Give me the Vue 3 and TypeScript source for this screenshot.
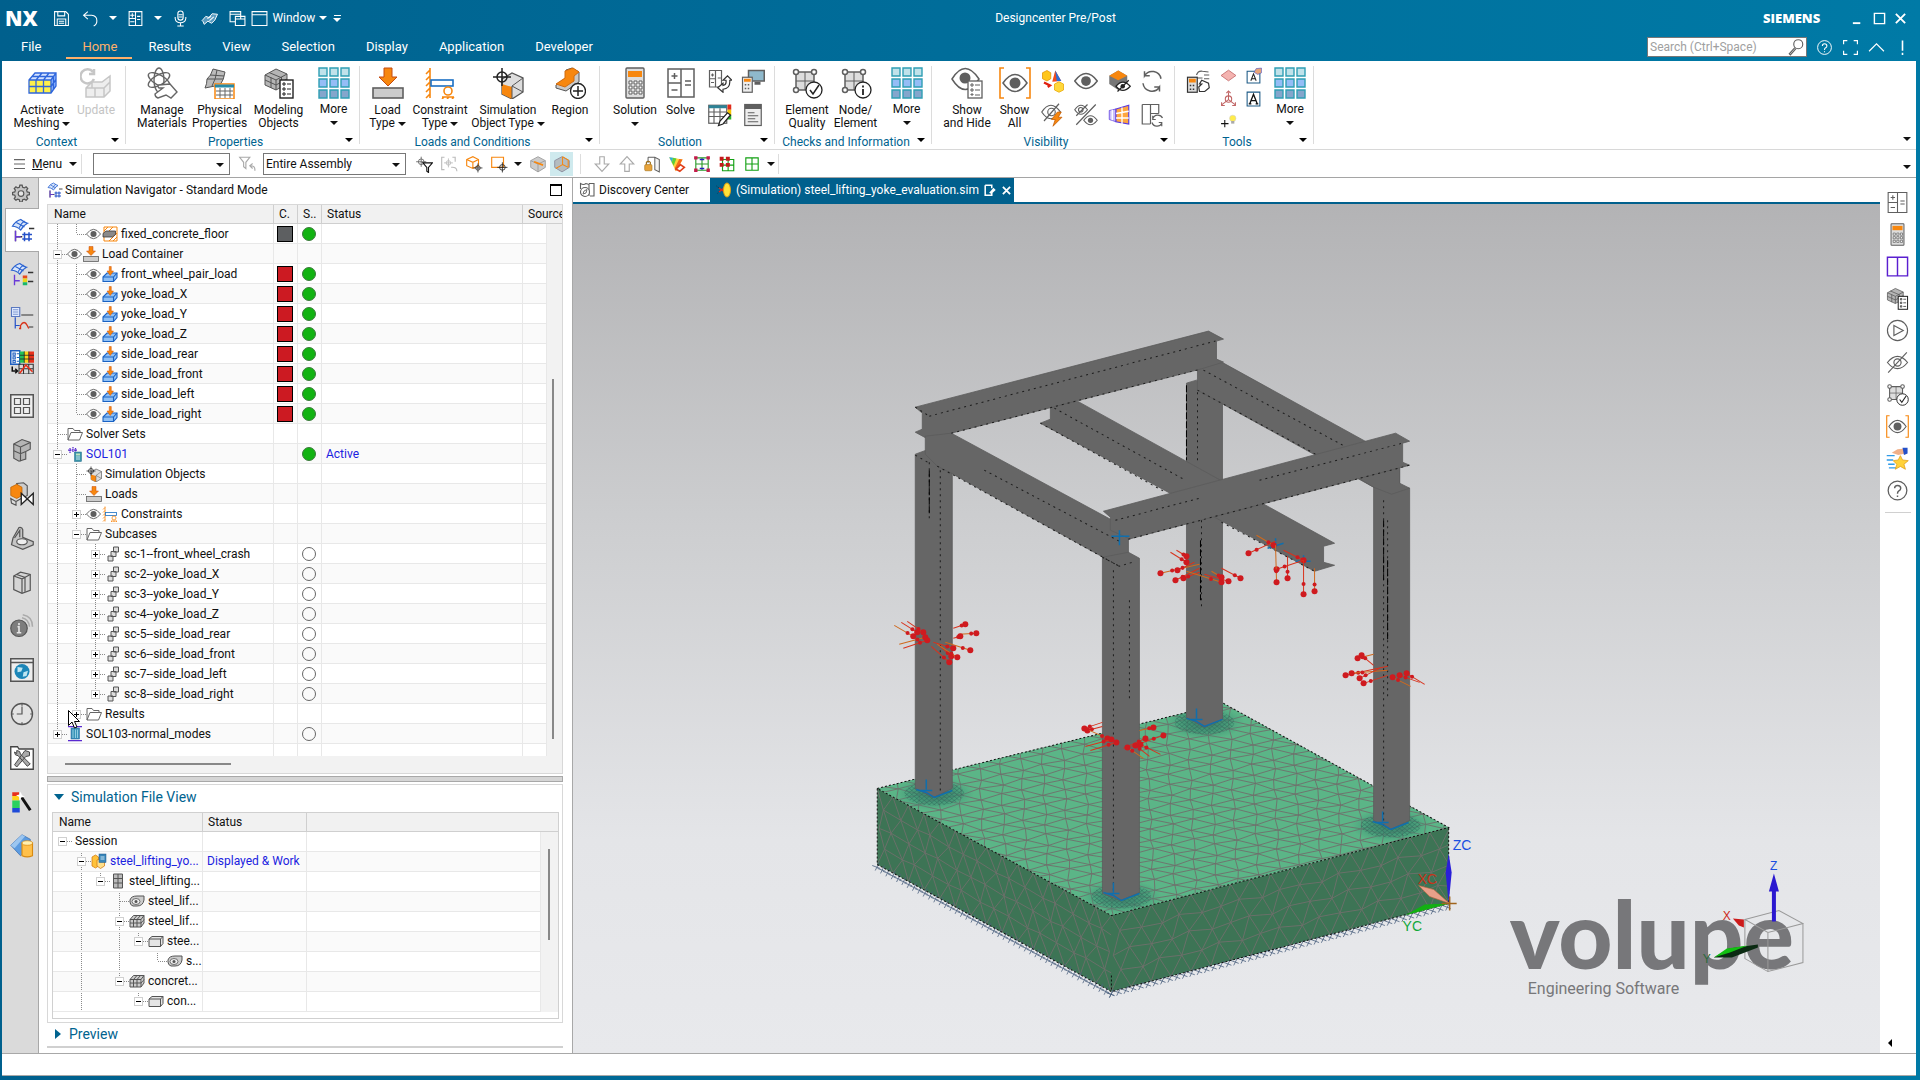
<script setup lang="ts">
import { ref } from 'vue'

type Pt = [number, number]
interface RibbonItem { kind: 'big' | 'grid'; width: number; icon?: string; lines?: string[]; caret?: boolean; more?: boolean; disabled?: boolean; cols?: number; tight?: boolean; icons?: string[] }
interface RibbonGroup { name: string; width: number; lead: number; items: RibbonItem[] }
interface TreeRow { guides: string; icons: string[]; label: string; swatch?: string; dot?: string; status?: string; active?: boolean }

const G = '#5f5f5f'
const O = '#f7870f'
const eyeShape = `<path d="M1 16Q16 -4 31 16Q16 36 1 16Z" fill="#fff" stroke="${G}" stroke-width="2"/><circle cx="16" cy="16" r="6.500" fill="${G}"/>`
const list = (x: number, y: number) =>
  `<rect x="${x}" y="${y}" width="13" height="18" fill="#fff" stroke="#222" stroke-width="1.4"/><path d="M${x + 3} ${y + 3}h2v2h-2zM${x + 3} ${y + 8}h2v2h-2zM${x + 3} ${y + 13}h2v2h-2zM${x + 7} ${y + 4}h4M${x + 7} ${y + 9}h4M${x + 7} ${y + 14}h4" fill="none" stroke="#222"/>`
const calc = `<rect x="7" y="1" width="18" height="30" rx="1" fill="#ddd" stroke="${G}" stroke-width="1.4"/><rect x="9" y="4" width="14" height="6" fill="${O}"/><path d="M10 14h3v3h-3zM15 14h3v3h-3zM20 14h3v3h-3zM10 19h3v3h-3zM15 19h3v3h-3zM20 19h3v3h-3zM10 24h3v3h-3zM15 24h3v3h-3zM20 24h3v3h-3z" fill="#fff" stroke="${G}"/>`
const cubeMesh = `<path d="M2 8L13 2L24 7V17L13 23L2 18Z" fill="#b5b5b5" stroke="#555"/><path d="M2 8L13 13L24 7M13 13V23M6 5.500L18 10.500M8 10.500V21M18.500 10V20M2 13L13 18L24 12" fill="none" stroke="#555"/>`
const nodes = (extra: string) =>
  `<path d="M5 5H23V23H5Z" fill="#ddd" stroke="${G}" stroke-width="1.500"/><path d="M14 5V23M5 14H23" stroke="${G}"/><g fill="#fff" stroke="${G}" stroke-width="1.500"><circle cx="5" cy="5" r="2.500"/><circle cx="23" cy="5" r="2.500"/><circle cx="5" cy="23" r="2.500"/></g><circle cx="23" cy="23" r="8" fill="#fff" stroke="#222" stroke-width="1.300"/>${extra}`
const solveShape = `<path d="M3 2H29V30H3ZM16 2V30M3 16H16M6.500 9H12.500M9.500 6V12M6.500 23H12.500M20 14H26M20 18H26" fill="none" stroke="${G}" stroke-width="1.500"/>`
const target = (x: number, y: number, r: number, c = '#222') =>
  `<g fill="none" stroke="${c}" stroke-width="1.500"><circle cx="${x}" cy="${y}" r="${r}"/><path d="M${x - r - 4} ${y}H${x + r + 4}M${x} ${y - r - 4}V${y + r + 4}"/></g>`
const meshSurface = '<path d="M2 11Q6 4 13 2Q18 6 22 7Q16 10 13 16Q8 11 2 11Z" fill="#d8e6fb" stroke="#2a62d0" stroke-width="1.600"/><path d="M7 6Q13 9 18 12M11 13Q13 7 18 4" fill="none" stroke="#2a62d0" stroke-width="1.400"/>'
const loadShape = `<path d="M12 1H20V10H25L16 19L7 10H12Z" fill="${O}" stroke="#c44a10"/><rect x="1" y="21" width="30" height="10" fill="#ccc" stroke="${G}" stroke-width="1.600"/>`
const constraintShape = `<path d="M6 1V31M6 3L2 7M6 9L2 13M6 15L2 19M6 21L2 25M6 27L2 31M18 30H30M20 30l-2 2M25 30l-2 2M30 30l-2 2" fill="none" stroke="${O}" stroke-width="1.600"/><rect x="7" y="13" width="22" height="6" fill="#fff" stroke="#1a6fc4" stroke-width="1.600"/><circle cx="24" cy="24" r="4" fill="none" stroke="${O}" stroke-width="1.600"/>`
const letterBox = (y: number) => `<path d="M4 ${y}H28V30H4Z" fill="#fff" stroke="#1c5a86" stroke-width="2"/>`

const icons: Record<string, string> = {
  mesh: '<path d="M3 13L9 6H30L25 13Z" fill="#d5e3ff"/><path d="M3 13H25V26H3Z" fill="#fff04a"/><path d="M25 13L30 6V19L25 26Z" fill="#8fb5ff"/><path d="M3 13L9 6H30V19L25 26H3ZM3 13H25V26M25 13L30 6M3 19.500H25L30 12.500M10 13V26M17.500 13V26M10 13L16 6M17.500 13L23 6M6 9.500H27.500V22" fill="none" stroke="#2f66dc" stroke-width="1.300"/>',
  update: '<path d="M13 5A7 7 0 1 0 14 12M14 2V7H9" fill="none" stroke="#c6c6c6" stroke-width="2.500"/><path d="M6 21L12 15H22L30 9V24L24 30H6ZM6 21H24V30M24 21L30 15M15 21V30M12 15V21" fill="#eee" stroke="#c6c6c6" stroke-width="1.500"/>',
  atom: `<g fill="none" stroke="#666" stroke-width="1.400"><ellipse cx="13" cy="13" rx="12" ry="5" transform="rotate(30 13 13)"/><ellipse cx="13" cy="13" rx="12" ry="5" transform="rotate(90 13 13)"/><ellipse cx="13" cy="13" rx="12" ry="5" transform="rotate(150 13 13)"/></g><path d="M9 27L17 21H13Q11 19 13 18L24 17L31 25L25 31L20 28L12 31Q9 30 9 27Z" fill="#fff" stroke="#666" stroke-width="1.400"/>`,
  physical: '<path d="M3 12Q7 9 9 2L21 5Q20 13 16 18L1 21Q3 17 3 12Z" fill="#bbb" stroke="#555"/><path d="M13 3Q12 12 8 19M3 12L19 12M6 8L20 9" fill="none" stroke="#555"/><rect x="11" y="17" width="19" height="15" fill="#fff" stroke="#f7870f" stroke-width="1.500"/><path d="M11 19H30" stroke="#268aa8" stroke-width="3"/><path d="M12 24H29M12 28H29M16 21V31M21 21V31M26 21V31" stroke="#666"/>',
  modeling: cubeMesh + list(17, 13),
  more: '<g stroke="#2f9fb4" stroke-width="1.400"><path d="M1 1h8v8h-8zM12 1h8v8h-8zM23 1h8v8h-8z" fill="#c0e2ea"/><path d="M1 12h8v8h-8zM12 12h8v8h-8zM23 12h8v8h-8z" fill="#95bdf6"/><path d="M1 23h8v8h-8zM12 23h8v8h-8zM23 23h8v8h-8z" fill="#84a6cc"/></g>',
  load: loadShape,
  constraint: constraintShape,
  simobj: '<path d="M10 12L20 6L31 11V25L20 32L10 27Z" fill="#ddd" stroke="#555" stroke-width="1.300"/><path d="M10 17L20 20V32L10 27Z" fill="#f7870f"/><path d="M20 19L31 11M20 19L31 25M20 19V32" fill="none" stroke="#555"/>' + target(10, 10, 5),
  region: `<path d="M2 18L12 11V3L18 1L25 5V15L12 24L2 21Z" fill="#c9c9c9" stroke="#555"/><path d="M2 17L11 11V4L19 1L25 5L20 9V14L11 20Z" fill="${O}" stroke="#d06c10"/><circle cx="24" cy="24" r="7.500" fill="#fff" stroke="#222" stroke-width="1.300"/><path d="M19 24H29M24 19V29" stroke="#222" stroke-width="1.500"/>`,
  solution: calc,
  solve: solveShape,
  solveArrow: `<path d="M2 2H18V24H2ZM10 2V24M2 13H10M4 8H8M6 6V10M4 18H8M13 12H17" fill="none" stroke="${G}" stroke-width="1.600"/><path d="M13 25L20 19V22Q25 21 24 15H20L26 9L32 15H29Q30 26 20 27V31Z" fill="#fff" stroke="#333" stroke-width="1.600"/>`,
  monitor: `<rect x="10" y="2" width="21" height="14" fill="#8fb9cc" stroke="${G}" stroke-width="2"/><path d="M18 17h8v4h-8z" fill="${G}"/><rect x="2" y="11" width="13" height="20" fill="#eee" stroke="${G}" stroke-width="1.600"/><path d="M4 13h9v4h-9z" fill="${O}"/><path d="M5 20h2v2h-2zM9 20h2v2h-2zM5 25h2v2h-2zM9 25h2v2h-2z" fill="${G}"/>`,
  tableEdit: `<rect x="1" y="3" width="24" height="24" fill="#fff" stroke="${G}" stroke-width="1.600"/><path d="M1 5H25" stroke="#2d8296" stroke-width="4"/><path d="M1 12H25M1 18H25M8 7V27M16 7V27" stroke="${G}" stroke-width="1.500"/><path d="M26 2h5v7h-5z" fill="#e02a1a"/><path d="M26 9h5v7h-5z" fill="#f6c400"/><path d="M26 16h5v6h-5z" fill="#2bb62b"/><path d="M14 30L16 24L26 13L30 16L20 28Z" fill="#fff" stroke="#222" stroke-width="1.600"/>`,
  log: `<rect x="5" y="2" width="22" height="28" fill="#eee" stroke="${G}" stroke-width="1.600"/><path d="M5 5H27" stroke="${G}" stroke-width="6"/><path d="M9 13H18M9 17H23M9 21H19M9 25H23" stroke="${G}" stroke-width="1.600"/>`,
  quality: nodes('<path d="M19 23L22 27L28 18" fill="none" stroke="#222" stroke-width="1.500"/>'),
  nodeInfo: nodes('<path d="M23 18.500V20.500M23 22V28" fill="none" stroke="#222" stroke-width="1.800"/>'),
  showHide: `<path d="M1 12Q14 -9 28 12Q14 33 1 12Z" fill="#fff" stroke="${G}" stroke-width="1.500"/><circle cx="14" cy="11" r="5.500" fill="${G}"/><rect x="17" y="14" width="14" height="17" fill="#fff" stroke="${G}" stroke-width="1.300"/><path d="M20 17h2v2h-2zM20 22h2v2h-2zM20 27h2v1h-2zM24 18h5M24 23h5M24 28h5" fill="none" stroke="${G}"/>`,
  showAll: `<path d="M5 1H1V31H5M27 1H31V31H27" fill="none" stroke="${O}" stroke-width="1.600"/><path d="M4 16Q16 -1 28 16Q16 33 4 16Z" fill="#fff" stroke="${G}" stroke-width="1.500"/><circle cx="16" cy="16" r="5.500" fill="${G}"/>`,
  shapes: '<path d="M2 5L8 2L13 5V13L8 16L2 13Z" fill="#ffc61a" stroke="#e09200"/><path d="M15 17L19 2L27 16Z" fill="#f24a1a"/><path d="M19 2L27 16H21Z" fill="#2a6fd8"/><path d="M4 18L12 22L9 24" fill="none" stroke="#e02010" stroke-width="3"/><path d="M18 20L24 17L30 20V28L24 31L18 28Z" fill="#ffd83a" stroke="#e8a500"/>',
  eye: eyeShape,
  cubeEye: `<path d="M3 9L15 2L27 9V20L15 28L3 20Z" fill="#777"/><path d="M3 9L15 2L27 9L15 15Z" fill="${O}"/><path d="M12 23Q21 12 31 23Q21 34 12 23Z" fill="#fff" stroke="#222" stroke-width="1.600"/><circle cx="21" cy="23" r="3" fill="#222"/><path d="M14 30L29 15" stroke="#222" stroke-width="1.600"/>`,
  refresh: `<path d="M28 13A12 12 0 0 0 6 9V3M6 9H13M4 19A12 12 0 0 0 26 24V30M26 24H19" fill="none" stroke="${G}" stroke-width="2"/>`,
  eyeBolt: `<path d="M1 12Q13 -6 26 12Q13 30 1 12Z" fill="#fff" stroke="${G}" stroke-width="1.600"/><circle cx="14" cy="12" r="5" fill="none" stroke="${G}" stroke-width="1.500"/><path d="M4 24L24 1" stroke="${G}" stroke-width="1.600"/><path d="M22 12L14 22H19L16 31L28 19H23L27 12Z" fill="${O}" stroke="#c05a00"/>`,
  eyeSwap: `<path d="M1 9Q9 -3 18 9Q9 21 1 9ZM13 23Q22 11 31 23Q22 35 13 23Z" fill="#fff" stroke="${G}" stroke-width="1.500"/><circle cx="9" cy="9" r="3" fill="none" stroke="${G}" stroke-width="1.500"/><circle cx="22" cy="23" r="3.500" fill="${G}"/><path d="M3 29L29 2M3 17L18 2" stroke="${G}" stroke-width="1.600"/>`,
  clip: '<path d="M3 10L12 8V25L3 22Z" fill="#c9bdf8" stroke="#5a3ae0"/><path d="M12 8L29 3V28L12 25Z" fill="#ffa63e" stroke="#5a3ae0" stroke-width="1.500"/><path d="M12 14L29 11M12 20L29 20M20 6V28M7 9V23" stroke="#fff" stroke-width="1.800"/>',
  layoutRefresh: `<path d="M3 2H25V14M3 2V28H14M14 2V28M14 14H25" fill="none" stroke="${G}" stroke-width="1.600"/><path d="M30 20A7 7 0 0 0 17 21M16 26A7 7 0 0 0 29 27M17 17V22H21M29 31V26H25" fill="none" stroke="${G}" stroke-width="1.600"/>`,
  calcHand: `<path d="M14 8Q16 2 22 3L30 4M14 12H22M24 8H31M24 13H31" fill="none" stroke="${G}" stroke-width="1.600"/><rect x="2" y="11" width="13" height="20" fill="#ddd" stroke="#333" stroke-width="1.600"/><path d="M4 13h9v5h-9z" fill="${O}"/><path d="M5 21h2v2h-2zM9 21h2v2h-2zM5 26h2v2h-2zM9 26h2v2h-2z" fill="#333"/><path d="M17 24L21 20H18L21 15L30 19L31 25L25 30H18Z" fill="#fff" stroke="#333" stroke-width="1.600"/>`,
  diamond: '<path d="M2 16L16 6L30 16L16 26Z" fill="#f4b3b0" stroke="#c46a6a" stroke-width="1.600"/>',
  noteEdit: letterBox(8) + '<path d="M11 26L16 13L21 26M13 22H19" fill="none" stroke="#222" stroke-width="2"/><path d="M17 10L21 3L31 2V11L24 14Z" fill="#e8a57a" stroke="#3a48c8"/>',
  csys: '<g fill="none" stroke="#c06464" stroke-width="2"><path d="M16 18V4M16 18L3 28M16 18L29 28"/><circle cx="16" cy="17" r="6"/><path d="M12 6L16 2L20 6M3 23V29H9M29 23V29H23"/></g>',
  letterA: letterBox(4) + '<path d="M9 26L16 8L23 26M12 20H20M7 26H12M20 26H25" fill="none" stroke="#111" stroke-width="2.500"/>',
  bulb: '<path d="M2 20H16M9 13V27" stroke="#111" stroke-width="2"/><circle cx="24" cy="10" r="6" fill="#ffec4a" stroke="#ccc"/><path d="M21 15h6v5h-6z" fill="#aaa"/>',
  save: '<path d="M3 3H24L29 8V29H3ZM9 3V11H22V3M8 29V17H24V29M11 21H21M11 25H21" fill="none" stroke="#fff" stroke-width="2"/>',
  undo: '<path d="M11 3L3 10L11 17M3 10H18Q28 11 28 20Q28 27 22 30" fill="none" stroke="#fff" stroke-width="2"/>',
  qcalc: '<path d="M4 3H28V29H4ZM16 3V29M4 16H16M6 10H14M10 6V14M6 22H14M19 12H25M19 18H25" fill="none" stroke="#fff" stroke-width="2"/>',
  mic: '<rect x="11" y="2" width="10" height="17" rx="5" fill="none" stroke="#fff" stroke-width="2"/><path d="M6 13V16Q7 24 16 24Q25 24 26 16V13M16 24V30M10 30H22M12 9H20M12 13H20" fill="none" stroke="#fff" stroke-width="2"/>',
  hand: '<path d="M2 20L9 12L15 14L21 7L31 8L26 19L20 25L13 21L6 27L4 22Z" fill="#5a9cc0" stroke="#fff" stroke-width="1.800"/><path d="M12 16L19 12M16 20L24 13" stroke="#fff" stroke-width="2"/>',
  windows: '<path d="M2 3H22V17H12V22H2ZM2 8H22M12 12H30V29H12ZM12 17H30" fill="none" stroke="#fff" stroke-width="2"/>',
  window: '<path d="M2 3H30V29H2ZM2 9H30" fill="none" stroke="#fff" stroke-width="2"/>',
  help: `<circle cx="16" cy="16" r="13" fill="none" stroke="currentColor" stroke-width="1.800"/><path d="M12 13Q12 9 16 9Q20.500 9 20.500 13Q20.500 15.500 17.500 17Q16 18 16 20.500M16 23V25" fill="none" stroke="currentColor" stroke-width="2"/>`,
  full: '<path d="M3 10V3H10M22 3H29V10M29 22V29H22M10 29H3V22" fill="none" stroke="#fff" stroke-width="2.200"/>',
  up: '<path d="M2 23L16 9L30 23" fill="none" stroke="#fff" stroke-width="2.200"/>',
  bang: '<path d="M16 3V22M16 26V30" stroke="#fff" stroke-width="3"/>',
  search: `<circle cx="20" cy="11" r="8" fill="none" stroke="${G}" stroke-width="2"/><path d="M14 17L4 28L6 30L16 19" fill="none" stroke="${G}" stroke-width="2"/>`,
  filterBack: '<path d="M3 4H21L14 13V24L10 21V13ZM30 28Q31 19 22 19M26 15L21 19L26 24" fill="none" stroke="#a9a9a9" stroke-width="2"/>',
  targetFilter: target(11, 12, 5, G) + '<path d="M14 14H31L24 22V31L21 29V22Z" fill="#fff" stroke="#111" stroke-width="2"/>',
  targetUndo: '<path d="M8 4H3V26H8M22 4H27V12" fill="none" stroke="#bbb" stroke-width="2"/>' + target(15, 14, 4, '#bbb') + '<path d="M30 29Q30 21 20 22" fill="none" stroke="#bbb" stroke-width="2"/>',
  cubeTarget: `<path d="M3 8L14 3L24 8V19L14 24L3 19ZM3 8L14 13L24 8M14 13V24" fill="#fff" stroke="${O}" stroke-width="2"/>` + target(23, 23, 4, '#333'),
  squareTarget: `<path d="M3 4H24V22H3Z" fill="#fff" stroke="${O}" stroke-width="2"/>` + target(22, 22, 5),
  cubeGrey: `<path d="M3 10L16 3L29 10V22L16 30L3 22Z" fill="#ccc" stroke="#999" stroke-width="1.500"/><path d="M16 16V30M3 10L16 16L29 10" fill="none" stroke="#999" stroke-width="1.500"/><path d="M9 12L25 18" stroke="${O}" stroke-width="3"/>`,
  cubeActive: `<path d="M3 10L16 3L29 10V22L16 30L3 22Z" fill="#b4bcc0" stroke="#889" stroke-width="1.500"/><path d="M17 3V17L5 24M17 17L27 22M17 3L27 9V22" fill="none" stroke="${O}" stroke-width="1.800"/>`,
  down: '<path d="M12 3H20V16H28L16 29L4 16H12Z" fill="#fff" stroke="#aaa" stroke-width="2"/>',
  upArrow: '<path d="M12 29H20V16H28L16 3L4 16H12Z" fill="#fff" stroke="#aaa" stroke-width="2"/>',
  lockPage: `<path d="M9 4H21L29 8V30L21 26V4M9 4V14" fill="#f4f4f4" stroke="${G}" stroke-width="1.800"/><rect x="3" y="17" width="13" height="11" rx="2" fill="#e9a43a" stroke="#9c6a10"/><path d="M6 17V13Q9 9 13 13V17" fill="none" stroke="#9c6a10" stroke-width="2"/>`,
  cone: '<path d="M2 4L26 8L14 29Z" fill="#ffd23a"/><path d="M2 4L9 5L7 13Z" fill="#28b0e0"/><path d="M9 5L15 6L10 19L7 13Z" fill="#5ad03a"/><path d="M20 7L26 8L14 29L12 23Z" fill="#f46a1a"/><path d="M22 17L29 22L21 29L14 25Z" fill="#fff" stroke="#e2401a" stroke-width="3"/>',
  mesh4: '<path d="M5 5H27V27H5ZM16 5V27M5 16H27" fill="none" stroke="#2a9a2a" stroke-width="2"/><path d="M2 2h6v6h-6zM24 2h6v6h-6zM2 24h6v6h-6zM24 24h6v6h-6z" fill="#c41a4a"/><path d="M12 8H20M12 24H20" stroke="#2020c0" stroke-width="3"/>',
  mesh3: '<path d="M8 8H28V28H8ZM18 8V28M8 18H28" fill="none" stroke="#12a012" stroke-width="2"/><path d="M3 3h7v7h-7zM14 3h7v7h-7zM3 14h7v7h-7zM14 14h7v7h-7z" fill="#c41a1a"/>',
  mesh2: '<path d="M5 5H27V27H5ZM16 5V27M5 16H27" fill="#fff" stroke="#12a012" stroke-width="2"/>',
  gear: '<path d="M14 2h4l1 4 3 1 3-2 3 3-2 3 1 3 4 1v4l-4 1-1 3 2 3-3 3-3-2-3 1-1 4h-4l-1-4-3-1-3 2-3-3 2-3-1-3-4-1v-4l4-1 1-3-2-3 3-3 3 2 3-1z" fill="#c4c4c4" stroke="#555" stroke-width="2.200"/><circle cx="16" cy="17" r="5" fill="#e6e6e6" stroke="#555" stroke-width="2"/>',
  navSim: meshSurface + '<path d="M24 14H31M6 17V31M6 25H15" fill="none" stroke="#333" stroke-width="1.800"/><path d="M6 17V31M6 25H13" stroke="#6a3ad8" stroke-width="1.800"/><path d="M18 19V31M24 19V31M15 22H28M15 28H28" stroke="#2450c8" stroke-width="2"/>',
  navPost: meshSurface + '<path d="M24 14H31M24 26H31" stroke="#333" stroke-width="1.800"/><path d="M6 17V31M6 25H13" stroke="#6a3ad8" stroke-width="1.800"/><path d="M17 18h6v4h-6z" fill="#e84a1a"/><path d="M17 22h6v5h-6z" fill="#e8d81a"/><path d="M17 27h6v4h-6z" fill="#1ab86a"/>',
  navXy: '<path d="M2 2H13V14H2Z" fill="#e2ecff" stroke="#5a78c0" stroke-width="1.500"/><path d="M4 5H11M4 8H11M4 11H11" stroke="#5a78c0"/><path d="M15 12H31M25 28H31" stroke="#333" stroke-width="1.600"/><path d="M7 15V30M7 26H13" stroke="#2450c8" stroke-width="1.600"/><path d="M12 30H14V26Q19 18 23 26L25 30" fill="none" stroke="#d8341a" stroke-width="1.800"/>',
  navMulti: '<path d="M1 1H13V19H1Z" fill="#fff" stroke="#2060c0" stroke-width="2"/><path d="M4 4h3v3h-3zM4 9h3v3h-3zM4 14h3v3h-3zM9 5h3M9 10h3M9 15h3" fill="none" stroke="#2060c0" stroke-width="1.500"/><path d="M13 2H20V17H13Z" fill="#22c05a"/><path d="M19 2H25V17H19Z" fill="#ffd21a"/><path d="M25 2H32V17H25Z" fill="#e8301a"/><path d="M13 7H32M13 12H32M19 2V17M25 2V17" stroke="#222"/><path d="M12 19H31V32H12ZM18 19V32M25 19V32M12 25H31" fill="none" stroke="#333" stroke-width="1.400"/><path d="M13 31L21 20L30 29" fill="none" stroke="#e8301a" stroke-width="2"/><path d="M3 22V28H9M7 25L10 28L7 31" fill="none" stroke="#111" stroke-width="2"/>',
  four: '<path d="M1 1H31V31H1Z" fill="#eee" stroke="#555" stroke-width="2"/><path d="M6 6h8v8h-8zM18 6h8v8h-8zM6 18h8v8h-8zM18 18h8v8h-8z" fill="#eee" stroke="#555" stroke-width="1.600"/>',
  part: '<path d="M5 8L16 2L27 6V15L21 18V28L12 31L5 27Z" fill="#b5b5b5" stroke="#555" stroke-width="1.500"/><path d="M5 8L14 12V31M14 12L27 6M5 17L14 21L21 18" fill="none" stroke="#555" stroke-width="1.500"/>',
  constraintNav: `<path d="M9 2L18 1L23 5V18L16 22Z" fill="#ccc" stroke="#555" stroke-width="1.500"/><path d="M1 7L9 3L16 7V18L9 22L1 18Z" fill="${O}" stroke="#b86000"/><path d="M1 22L8 26V31L2 28ZM8 26L15 22" fill="#ddd" stroke="#555" stroke-width="1.500"/><path d="M15 15V30L31 15V30Z" fill="#fff" stroke="#222" stroke-width="1.800"/>`,
  hinge: '<path d="M4 16L12 2Q16 1 17 5V15L31 21V25L17 31L2 25Z" fill="#c5c5c5" stroke="#555" stroke-width="1.600"/><ellipse cx="16" cy="21" rx="7" ry="4" fill="#eee" stroke="#555" stroke-width="1.600"/><path d="M6 16L13 6V15" fill="none" stroke="#555" stroke-width="1.600"/>',
  books: '<path d="M5 8L14 3L27 6V27L16 31L5 26Z" fill="#d5d5d5" stroke="#555" stroke-width="1.600"/><path d="M5 8L16 12V31M16 12L27 6M9 6L20 10V29" fill="none" stroke="#555" stroke-width="1.600"/>',
  info: '<path d="M16 5Q25 7 26 17M17 1Q30 3 30 17" fill="none" stroke="#aaa" stroke-width="2"/><circle cx="12" cy="19" r="11" fill="#7d7d7d" stroke="#555" stroke-width="1.600"/><path d="M12 12V15M10 17H12V25M9 25H15" fill="none" stroke="#e5e5e5" stroke-width="2.200"/>',
  globe: '<path d="M1 1H31V31H1ZM1 6H31" fill="#eee" stroke="#555" stroke-width="2"/><circle cx="16" cy="18" r="10" fill="#1c86b8"/><path d="M10 12L17 13L15 18L10 19ZM18 19L24 17L22 24L17 25Z" fill="#bfe6f2"/>',
  clock: '<circle cx="16" cy="16" r="14" fill="#e3e3e3" stroke="#555" stroke-width="1.800"/><path d="M16 6V16H9M16 2V5M16 27V30M2 16H5M27 16H30" fill="none" stroke="#555" stroke-width="1.600"/>',
  tools: '<path d="M1 1H10L12 4H31V31H1Z" fill="#fff" stroke="#444" stroke-width="1.800"/><path d="M6 8Q6 13 11 13L23 27L27 24L14 11Q14 6 9 6V10ZM26 8L20 6L17 10L6 25L9 28L21 14L26 13Z" fill="#aaa" stroke="#444" stroke-width="1.300"/>',
  wand: '<path d="M3 3H12V8H3Z" fill="#e8301a"/><path d="M3 8H12V14H3Z" fill="#ffd21a"/><path d="M3 14H13V24H3Z" fill="#2ad060"/><path d="M3 24H13V30H3Z" fill="#1f4ad8"/><path d="M15 9L27 27" stroke="#111" stroke-width="4"/><path d="M14 2L16 7L20 9L15 10L13 14L12 9L8 7L13 6Z" fill="#fff"/>',
  colorPart: '<path d="M1 15L16 1L27 7V17L14 29Z" fill="#5c9be0" stroke="#3a6fb0"/><path d="M1 15L16 1L20 3L6 19Z" fill="#9cc6f0"/><path d="M16 12H30V29Q23 32 16 29Z" fill="#ffc04a" stroke="#d88a10" stroke-width="1.500"/><ellipse cx="23" cy="12" rx="7" ry="3" fill="#fff0b0" stroke="#d88a10"/>',
  split: '<path d="M2 3H30V29H2ZM16 3V29" fill="none" stroke="#5a1fd0" stroke-width="2"/>',
  play: `<circle cx="16" cy="16" r="14" fill="none" stroke="${G}" stroke-width="1.600"/><path d="M11 9L24 16L11 23Z" fill="none" stroke="${G}" stroke-width="1.600"/>`,
  eyeOff: `<path d="M2 16Q16 -1 30 16Q16 33 2 16Z" fill="none" stroke="${G}" stroke-width="1.600"/><circle cx="16" cy="16" r="5" fill="none" stroke="${G}" stroke-width="1.600"/><path d="M3 30L29 2" stroke="${G}" stroke-width="1.600"/>`,
  star: '<path d="M1 12H12M1 18H10M3 24H12M4 29H14" stroke="#2f9be8" stroke-width="2"/><path d="M20 12L23 18L31 19L25 24L27 31L20 27L13 31L15 24L10 19L17 18Z" fill="#ffd23a" stroke="#e09a10"/><path d="M8 8L16 3L27 2V9L17 11Z" fill="#f0b08a"/><path d="M23 1H30V9L25 11Z" fill="#2450c8"/>',
  treeFloor: `<path d="M4 2H30V30H4Z" fill="#fff" stroke="${O}" stroke-width="2"/><path d="M4 10L12 2M4 20L22 2M14 30L30 14M22 30L30 22" stroke="${O}" stroke-width="2"/><path d="M2 15L8 10H27V17L21 22H2Z" fill="#8a8a8a" stroke="#333" stroke-width="1.500"/>`,
  treeLoad: `<path d="M2 22L10 14H30V23L23 31H2Z" fill="#8fc0f5" stroke="#1a62c4" stroke-width="2.200"/><path d="M2 22H23V31M23 22L30 14" fill="none" stroke="#1a62c4" stroke-width="2.200"/><path d="M14.500 1H18.500V10H23L16.500 19L10 10H14.500Z" fill="${O}" stroke="#d0500a"/>`,
  folder: '<path d="M2 28V5H12L15 9H26V13M2 28L8 13H31L25 28Z" fill="#fff" stroke="#666" stroke-width="2"/>',
  sol: '<path d="M2 8H20M6 4V14M12 2V12M17 4V14" stroke="#5a2ad0" stroke-width="2.500" stroke-dasharray="3 1"/><rect x="15" y="12" width="14" height="19" fill="#3a94a8" stroke="#1f6a8c"/><path d="M18 15h8v4h-8z" fill="#bfe6c0"/><path d="M18 22h8M18 26h8" stroke="#d0eef2" stroke-width="2"/>',
  sol103: '<path d="M2 1H30M2 29H30" stroke="#5a2ad0" stroke-width="2.500"/><rect x="8" y="4" width="17" height="22" fill="#3a94b8" stroke="#1f5a9c"/><path d="M12 7V24M17 7V24M21 7V24" stroke="#a5dcec" stroke-width="1.600"/>',
  subcase: '<path d="M17 2H27V12H17ZM12 11H22V21H12ZM6 20H16V30H6Z" fill="#ddd" stroke="#555" stroke-width="2"/>',
  fileSim: '<path d="M2 8L9 4L15 8V26L9 30L2 26Z" fill="#ffc23a" stroke="#d07a10" stroke-width="1.500"/><path d="M12 14L20 11L27 14V26L19 31L12 26Z" fill="#ffe08a" stroke="#d07a10" stroke-width="1.500"/><rect x="16" y="2" width="14" height="17" fill="#3a86b8" stroke="#1f5a8c"/><path d="M19 8h8M19 12h8" stroke="#cfe8f5" stroke-width="2"/>',
  fileFem: '<path d="M7 2H25V30H7ZM16 2V30M7 11H25M7 20H25" fill="#bbb" stroke="#555" stroke-width="2"/>',
  filePart: '<path d="M2 14Q4 6 16 6H30V14Q28 26 16 26H8Q2 24 2 18Z" fill="#ccc" stroke="#555" stroke-width="2"/><ellipse cx="14" cy="17" rx="8" ry="6" fill="#eee" stroke="#555" stroke-width="1.600"/><circle cx="14" cy="17" r="3" fill="#555"/>',
  fileMesh: '<path d="M2 13L9 5H30V20L24 28H2ZM2 13H24V28M24 13L30 5M2 20H24L30 13M9 13V28M16 13V28M9 13L16 5M16 13L23 5" fill="#ccc" stroke="#555" stroke-width="2"/>',
  fileIdeal: '<path d="M2 12L8 7H30V21L25 27H2ZM2 12H25V27M25 12L30 7" fill="#e5e5e5" stroke="#555" stroke-width="2"/>',
  discovery: `<path d="M3 14V3Q9 7 14 3L20 5V28M20 3H30V28H22" fill="none" stroke="${G}" stroke-width="2.200"/><circle cx="12" cy="20" r="9" fill="#fff" stroke="${G}" stroke-width="2.200"/><path d="M8 24L10 18L16 15L14 22Z" fill="none" stroke="${G}" stroke-width="1.800"/>`,
  simTab: '<path d="M1 8L10 15L2 24" fill="none" stroke="#222" stroke-width="1.500" stroke-dasharray="2 2"/><path d="M6 12L17 20M6 20L17 11" stroke="#e02a1a" stroke-width="2.500"/><ellipse cx="22" cy="16" rx="7" ry="14" fill="#ffe23a" stroke="#e0a010" stroke-width="2"/>',
  clipboard: '<path d="M5 5H20V12M5 5V28H20V22" fill="none" stroke="#fff" stroke-width="3.500"/><path d="M14 22L24 11L29 16L19 25Z" fill="#fff"/>',
}

const menuTabs = ['File', 'Home', 'Results', 'View', 'Selection', 'Display', 'Application', 'Developer']
const activeMenu = ref('Home')

const ribbon: RibbonGroup[] = [
  { name: 'Context', width: 124, lead: 8, items: [
    { kind: 'big', width: 64, icon: 'mesh', lines: ['Activate', 'Meshing'], caret: true },
    { kind: 'big', width: 44, icon: 'update', lines: ['Update'], disabled: true } ] },
  { name: 'Properties', width: 234, lead: 9, items: [
    { kind: 'big', width: 54, icon: 'atom', lines: ['Manage', 'Materials'] },
    { kind: 'big', width: 61, icon: 'physical', lines: ['Physical', 'Properties'] },
    { kind: 'big', width: 57, icon: 'modeling', lines: ['Modeling', 'Objects'] },
    { kind: 'big', width: 53, icon: 'more', lines: ['More'], more: true } ] },
  { name: 'Loads and Conditions', width: 240, lead: 6, items: [
    { kind: 'big', width: 43, icon: 'load', lines: ['Load', 'Type'], caret: true },
    { kind: 'big', width: 62, icon: 'constraint', lines: ['Constraint', 'Type'], caret: true },
    { kind: 'big', width: 74, icon: 'simobj', lines: ['Simulation', 'Object Type'], caret: true },
    { kind: 'big', width: 50, icon: 'region', lines: ['Region'] } ] },
  { name: 'Solution', width: 175, lead: 12, items: [
    { kind: 'big', width: 46, icon: 'solution', lines: ['Solution'], more: true },
    { kind: 'big', width: 45, icon: 'solve', lines: ['Solve'] },
    { kind: 'grid', width: 66, cols: 2, icons: ['solveArrow', 'monitor', 'tableEdit', 'log'] } ] },
  { name: 'Checks and Information', width: 157, lead: 9, items: [
    { kind: 'big', width: 46, icon: 'quality', lines: ['Element', 'Quality'] },
    { kind: 'big', width: 51, icon: 'nodeInfo', lines: ['Node/', 'Element'] },
    { kind: 'big', width: 51, icon: 'more', lines: ['More'], more: true } ] },
  { name: 'Visibility', width: 243, lead: 9, items: [
    { kind: 'big', width: 52, icon: 'showHide', lines: ['Show', 'and Hide'] },
    { kind: 'big', width: 43, icon: 'showAll', lines: ['Show', 'All'] },
    { kind: 'grid', width: 132, cols: 4, icons: ['shapes', 'eye', 'cubeEye', 'refresh', 'eyeBolt', 'eyeSwap', 'clip', 'layoutRefresh'] } ] },
  { name: 'Tools', width: 139, lead: 5, items: [
    { kind: 'grid', width: 36, cols: 1, icons: ['calcHand'] },
    { kind: 'grid', width: 50, cols: 2, tight: true, icons: ['diamond', 'noteEdit', 'csys', 'letterA', 'bulb'] },
    { kind: 'big', width: 48, icon: 'more', lines: ['More'], more: true } ] },
]

const filterText = ref('')
const scope = ref('Entire Assembly')
const query = ref('')

const railIcons = ['gear', 'navSim', 'navPost', 'navXy', 'navMulti', 'four', 'part', 'constraintNav', 'hinge', 'books', 'info', 'globe', 'clock', 'tools', 'wand', 'colorPart']
const dockIcons = ['solve', 'solution', 'split', 'modeling', 'play', 'eyeOff', 'quality', 'showAll', 'star', 'help']

const RED = '#cc1a22'
const loads = ['front_wheel_pair_load', 'yoke_load_X', 'yoke_load_Y', 'yoke_load_Z', 'side_load_rear', 'side_load_front', 'side_load_left', 'side_load_right']
const subcases = ['front_wheel_crash', 'yoke_load_X', 'yoke_load_Y', 'yoke_load_Z', 'side_load_rear', 'side_load_front', 'side_load_left', 'side_load_right']

// Guide codes: | line, T branch, L last branch, p/q plus (middle/last), m/n minus (middle/last), s root minus
const tree: TreeRow[] = [
  { guides: '|L', icons: ['eye', 'treeFloor'], label: 'fixed_concrete_floor', swatch: '#5d5f61', dot: 'on' },
  { guides: 'm', icons: ['eye', 'load'], label: 'Load Container' },
  ...loads.map((label, i): TreeRow => ({ guides: i === loads.length - 1 ? '|L' : '|T', icons: ['eye', 'treeLoad'], label, swatch: RED, dot: 'on' })),
  { guides: 'T', icons: ['folder'], label: 'Solver Sets' },
  { guides: 'm', icons: ['sol'], label: 'SOL101', dot: 'on', status: 'Active', active: true },
  { guides: '|T', icons: ['simobj'], label: 'Simulation Objects' },
  { guides: '|T', icons: ['load'], label: 'Loads' },
  { guides: '|p', icons: ['eye', 'constraint'], label: 'Constraints' },
  { guides: '|m', icons: ['folder'], label: 'Subcases' },
  ...subcases.map((label, i): TreeRow => ({ guides: i === subcases.length - 1 ? '||q' : '||p', icons: ['subcase'], label: `sc-${i + 1}--${label}`, dot: 'off' })),
  { guides: '|q', icons: ['folder'], label: 'Results' },
  { guides: 'q', icons: ['sol103'], label: 'SOL103-normal_modes', dot: 'off' },
]

const files: TreeRow[] = [
  { guides: 's', icons: [], label: 'Session' },
  { guides: ' m', icons: ['fileSim'], label: 'steel_lifting_yo...', status: 'Displayed & Work', active: true },
  { guides: ' |n', icons: ['fileFem'], label: 'steel_lifting...' },
  { guides: ' | T', icons: ['filePart'], label: 'steel_lif...' },
  { guides: ' | m', icons: ['fileMesh'], label: 'steel_lif...' },
  { guides: ' | |n', icons: ['fileIdeal'], label: 'stee...' },
  { guides: ' | | L', icons: ['filePart'], label: 's...' },
  { guides: ' | n', icons: ['fileMesh'], label: 'concret...' },
  { guides: ' |  n', icons: ['fileIdeal'], label: 'con...' },
]

function guide(code: string): string {
  if (code === ' ') return ''
  let d = ''
  if (code !== 's') d += 'M9.5 0V10'
  if ('|Tpm'.includes(code)) d += 'M9.5 10V20'
  if (code !== '|') d += 'M10 10.5H19'
  let out = `<path d="${d}" fill="none" stroke="#8a8a8a" stroke-dasharray="1 1"/>`
  if ('pqmns'.includes(code)) {
    out += '<rect x="5.5" y="6.5" width="8" height="8" fill="#fff" stroke="#d0d0d0"/><path d="M7 10.5H12" stroke="#000"/>'
    if ('pq'.includes(code)) out += '<path d="M9.5 8V13" stroke="#000"/>'
  }
  return out
}

// Model geometry
function triMesh(o: Pt, u: Pt, v: Pt, cols: number, rows: number): string {
  const at = (i: number, j: number): string => {
    const s = Math.min(1, Math.max(0, (i + (j % 2) * 0.5) / cols))
    const w = Math.sin(i * 2.3 + j * 4.1) * 2
    const edge = j === 0 || j === rows ? 0 : w
    return `${(o[0] + u[0] * s + v[0] * j / rows + edge).toFixed(1)} ${(o[1] + u[1] * s + v[1] * j / rows + edge).toFixed(1)}`
  }
  let d = ''
  for (let j = 0; j < rows; j++) {
    for (let i = 0; i < cols; i++) {
      const k = j % 2 ? i + 1 : i
      d += `M${at(i, j)}L${at(i, j + 1)}M${at(k, j + 1)}L${at(j % 2 ? i : i + 1, j)}`
      if (j > 0) d += `M${at(i, j)}L${at(i + 1, j)}`
    }
  }
  return d
}
const leftMesh = triMesh([878, 788], [234, 127], [0, 76], 15, 4)
const rightMesh = triMesh([1112, 915], [338, -88], [0, 76], 17, 4)

function latticePath(): string {
  let d = ''
  const jit = (a: number, b: number) => Math.sin(a * 3.7 + b * 1.9) * 1.6
  for (let c = 0; c < 28; c++) {
    for (let r = 0; r < 24; r++) {
      const p = (cc: number, rr: number) => {
        const x = 872 + cc * 21 + rr * 0.5 + jit(cc, rr)
        const y = 694 + rr * 10 + (cc % 2) * 5 + jit(rr, cc) * 0.6
        return `${x.toFixed(1)} ${y.toFixed(1)}`
      }
      d += `M${p(c, r)}L${p(c, r + 1)}M${p(c, r)}L${p(c + 1, c % 2 ? r + 1 : r)}M${p(c, r)}L${p(c + 1, c % 2 ? r : r - 1)}`
    }
  }
  return d
}
const topMesh = latticePath()

function fringe(a: Pt, b: Pt, n: number): string {
  let d = ''
  for (let i = 0; i <= n; i++) {
    const x = a[0] + (b[0] - a[0]) * i / n
    const y = a[1] + (b[1] - a[1]) * i / n
    d += `M${(x + 2).toFixed(1)} ${(y - 2).toFixed(1)}l-4 8M${(x - 5).toFixed(1)} ${(y + 1).toFixed(1)}l8 3`
  }
  return d
}
const hatch = fringe([878, 864], [1112, 991], 44) + fringe([1112, 991], [1448, 904], 46)

const feet: Pt[] = [[935, 793], [1205, 722], [1122, 896], [1391, 825]]

const columns = {
  back: '1187,383 1197,380 1223,392 1223,719 1205,727 1187,717',
  right: '1374,486 1410,488 1410,820 1391,829 1374,820',
  left: '916,454 927,450 953,468 953,788 934,797 916,788',
  front: '1103,557 1129,552 1140,558 1140,892 1121,900 1103,893',
}
const rear = [
  columns.back,
  '1198,369 1216,361 1224,363 1400,460 1400,484 1374,487 1198,390',
  '1051,407 1057,402 1078,401 1335,543 1324,546 1324,562 1335,565 1315,571 1041,423 1051,419',
  '916,407 1209,331 1224,339 1217,341 1217,359 1224,362 1201,369 952,433 927,438 916,432 923,429 923,413',
  columns.right,
  '1359,478 1400,466 1400,483 1410,488 1392,494 1374,487',
]
const fore = [
  '1104,511 1396,433 1410,441 1403,443 1403,462 1410,465 1266,503 1129,539 1120,541 1111,534 1111,517',
  columns.left,
  '926,436 952,433 1111,519 1111,530 1129,538 1129,558 1120,566 952,473 938,466 926,454',
  columns.front,
]
const seams = 'M930 416L1216 341M916 407L930 416M952 433L1201 369M1055 408L1186 480M1222 522L1315 571M1041 423L1166 492M1204 370L1345 446M1198 390L1316 454M1116 520L1200 498M1260 480L1403 443M1129 539L1410 465M985 470L1120 541M938 466L1120 566M941 470V790M930 462V520M1114 570V890M1198 392V460M1202 520V610M1384 500V825M1388 520V700M1130 600V700M916 455L930 463M1103 557L1120 566L1133 562'

const arrows: [number, number, number, number][] = [
  [895, 625, 914, 636], [902, 622, 918, 632], [908, 621, 924, 632], [900, 644, 926, 637], [904, 648, 928, 640], [954, 628, 966, 624], [960, 634, 977, 633], [954, 638, 961, 636], [940, 645, 952, 656], [946, 642, 971, 650], [934, 642, 954, 648], [932, 646, 950, 662], [938, 644, 958, 657],
  [1171, 552, 1187, 562], [1177, 550, 1187, 556], [1200, 564, 1161, 573], [1200, 568, 1176, 580], [1200, 572, 1184, 578], [1187, 571, 1222, 582], [1205, 574, 1229, 581], [1222, 568, 1241, 578], [1212, 571, 1222, 577], [1195, 562, 1178, 570],
  [1276, 541, 1249, 553], [1257, 535, 1274, 545], [1284, 550, 1304, 560], [1304, 560, 1277, 569], [1276, 545, 1277, 582], [1288, 556, 1288, 578], [1304, 560, 1304, 594], [1315, 568, 1315, 591],
  [1103, 722, 1085, 728], [1103, 726, 1088, 730], [1090, 730, 1108, 738], [1086, 746, 1112, 739], [1091, 750, 1117, 742], [1140, 730, 1154, 727], [1132, 746, 1164, 735], [1124, 748, 1146, 738], [1144, 758, 1128, 747], [1161, 754, 1141, 744], [1150, 756, 1136, 745],
  [1374, 654, 1358, 658], [1374, 665, 1362, 655], [1388, 666, 1346, 675], [1388, 670, 1352, 673], [1388, 675, 1364, 683], [1380, 668, 1360, 678], [1411, 686, 1393, 677], [1420, 682, 1400, 675], [1425, 684, 1407, 673],
]
</script>

<template>
  <div class="app">
    <header class="title-bar">
      <div class="quick">
        <strong class="brand">NX</strong>
        <button class="q" aria-label="Save"><svg viewBox="0 0 32 32" v-html="icons.save" /></button>
        <button class="q" aria-label="Undo"><svg viewBox="0 0 32 32" v-html="icons.undo" /></button>
        <button class="q slim" aria-label="Undo list"><i class="caret" /></button>
        <button class="q" aria-label="Solve"><svg viewBox="0 0 32 32" v-html="icons.qcalc" /></button>
        <button class="q slim" aria-label="Solve list"><i class="caret" /></button>
        <button class="q" aria-label="Voice"><svg viewBox="0 0 32 32" v-html="icons.mic" /></button>
        <button class="q" aria-label="Touch"><svg viewBox="0 0 32 32" v-html="icons.hand" /></button>
        <button class="q near" aria-label="Switch window"><svg viewBox="0 0 32 32" v-html="icons.windows" /></button>
        <button class="window-btn"><svg viewBox="0 0 32 32" v-html="icons.window" />Window<i class="caret" /></button>
        <button class="q slim custom" aria-label="Customize"><i class="dash" /><i class="caret" /></button>
      </div>
      <h1>Designcenter Pre/Post</h1>
      <div class="frame-btns">
        <strong>SIEMENS</strong>
        <button aria-label="Minimize"><svg viewBox="0 0 14 14"><path d="M2 12H10" stroke="#fff" stroke-width="2" /></svg></button>
        <button aria-label="Restore"><svg viewBox="0 0 14 14"><path d="M1.500 1.500H12.500V12.500H1.500Z" fill="none" stroke="#fff" stroke-width="1.500" /></svg></button>
        <button aria-label="Close"><svg viewBox="0 0 14 14"><path d="M2 2L12 12M12 2L2 12" stroke="#fff" stroke-width="2" /></svg></button>
      </div>
    </header>

    <nav class="menu-bar">
      <button v-for="t in menuTabs" :key="t" :class="['tab', { on: activeMenu === t, first: t === 'File' }]" @click="activeMenu = t">{{ t }}</button>
      <div class="menu-right">
        <label class="search">
          <input v-model="query" type="text" placeholder="Search (Ctrl+Space)" aria-label="Search">
          <svg viewBox="0 0 32 32" v-html="icons.search" />
        </label>
        <button v-for="n in ['help', 'full', 'up', 'bang']" :key="n" :aria-label="n"><svg viewBox="0 0 32 32" v-html="icons[n]" /></button>
      </div>
    </nav>

    <section class="ribbon">
      <div v-for="g in ribbon" :key="g.name" class="group" :style="{ width: g.width + 'px' }">
        <div class="items" :style="{ paddingLeft: g.lead + 'px' }">
          <template v-for="(it, i) in g.items" :key="i">
            <button v-if="it.kind === 'big'" :class="['big', { more: it.more && it.icon === 'more' }]" :disabled="it.disabled" :style="{ width: it.width + 'px' }">
              <svg viewBox="0 0 32 32" v-html="icons[it.icon!]" />
              <span v-for="(l, k) in it.lines" :key="l">{{ l }}<i v-if="it.caret && k === 1" class="caret" /></span>
              <span v-if="it.more" class="caret-line"><i class="caret" /></span>
            </button>
            <div v-else :class="['grid', { tight: it.tight }]" :style="{ width: it.width + 'px', gridTemplateColumns: `repeat(${it.cols}, 1fr)` }">
              <button v-for="n in it.icons" :key="n" :aria-label="n"><svg viewBox="0 0 32 32" v-html="icons[n]" /></button>
            </div>
          </template>
        </div>
        <div class="caption"><span>{{ g.name }}</span><i class="caret" /></div>
      </div>
      <i class="caret ribbon-end" />
    </section>

    <section class="toolbar">
      <button class="menu-btn">
        <svg viewBox="0 0 10 10"><path d="M0 1.500H10M0 5.500H10M0 9.500H10" stroke="#666" /></svg>
        <span><u>M</u>enu</span><i class="caret" />
      </button>
      <i class="sep" />
      <div class="select one"><select v-model="filterText" aria-label="Selection filter"><option value="" /></select><i class="caret" /></div>
      <button class="t wide" aria-label="Reset filters"><svg viewBox="0 0 32 32" v-html="icons.filterBack" /></button>
      <div class="select two"><select v-model="scope" aria-label="Selection scope"><option>Entire Assembly</option></select><i class="caret" /></div>
      <button v-for="n in ['targetFilter', 'targetUndo', 'cubeTarget', 'squareTarget']" :key="n" class="t" :aria-label="n"><svg viewBox="0 0 32 32" v-html="icons[n]" /></button>
      <button class="t slim" aria-label="More selection"><i class="caret" /></button>
      <button class="t" aria-label="Shaded"><svg viewBox="0 0 32 32" v-html="icons.cubeGrey" /></button>
      <button class="t lit" aria-label="Highlight hidden edges"><svg viewBox="0 0 32 32" v-html="icons.cubeActive" /></button>
      <i class="sep" />
      <button v-for="n in ['down', 'upArrow', 'lockPage', 'cone', 'mesh4', 'mesh3', 'mesh2']" :key="n" class="t" :aria-label="n"><svg viewBox="0 0 32 32" v-html="icons[n]" /></button>
      <button class="t slim" aria-label="More display"><i class="caret" /></button>
      <i class="sep" />
      <i class="caret bar-end" />
    </section>

    <main class="body">
      <nav class="rail">
        <button v-for="(n, i) in railIcons" :key="n" :class="{ first: i === 0, on: i === 1 }" :aria-label="n"><svg viewBox="0 0 32 32" v-html="icons[n]" /></button>
      </nav>

      <aside class="panel">
        <div class="panel-title">
          <svg viewBox="0 0 32 32" v-html="icons.navSim" />
          <h2>Simulation Navigator - Standard Mode</h2>
          <button aria-label="Undock"><i /></button>
        </div>

        <div class="tree-box">
          <table class="tree">
            <colgroup><col class="c-name"><col class="c-tiny"><col class="c-tiny"><col class="c-status"><col class="c-src"><col></colgroup>
            <thead><tr><th class="lead">Name</th><th>C.</th><th>S..</th><th>Status</th><th colspan="2">Source</th></tr></thead>
            <tbody>
              <tr v-for="(r, i) in tree" :key="i">
                <td>
                  <div class="node" :class="{ active: r.active }">
                    <svg v-for="(c, k) in r.guides" :key="k" class="guide" viewBox="0 0 19 20" v-html="guide(c)" />
                    <svg v-for="n in r.icons" :key="n" :class="['ico', { eye: n === 'eye' }]" viewBox="0 0 32 32" v-html="icons[n]" />
                    <span>{{ r.label }}</span>
                  </div>
                </td>
                <td><i v-if="r.swatch" class="swatch" :style="{ background: r.swatch }" /></td>
                <td><i v-if="r.dot" :class="['dot', r.dot]" /></td>
                <td :class="{ active: r.active }">{{ r.status }}</td>
                <td /><td class="gutter" />
              </tr>
              <tr class="stub"><td /><td /><td /><td /><td /><td class="gutter" /></tr>
            </tbody>
          </table>
          <div class="h-track"><i /></div>
          <i class="v-thumb" />
          <svg class="pointer" viewBox="0 0 12 19"><path d="M.5 .5V15.500L4 12L6.500 18L9 17L6.500 11.500H11.500Z" fill="#fff" stroke="#000" /></svg>
        </div>

        <div class="splitter" />

        <section class="file-view">
          <button class="fold open"><i />Simulation File View</button>
          <div class="file-box">
            <table class="tree">
              <colgroup><col class="f-name"><col class="f-status"><col><col class="f-gut"></colgroup>
              <thead><tr><th class="lead">Name</th><th>Status</th><th colspan="2" /></tr></thead>
              <tbody>
                <tr v-for="(r, i) in files" :key="i">
                  <td>
                    <div class="node" :class="{ active: r.active }">
                      <svg v-for="(c, k) in r.guides" :key="k" class="guide" viewBox="0 0 19 20" v-html="guide(c)" />
                      <svg v-for="n in r.icons" :key="n" class="ico" viewBox="0 0 32 32" v-html="icons[n]" />
                      <span>{{ r.label }}</span>
                    </div>
                  </td>
                  <td :class="{ active: r.active }">{{ r.status }}</td><td /><td class="gutter" />
                </tr>
              </tbody>
            </table>
            <i class="v-thumb" />
          </div>
        </section>
        <button class="fold preview"><i />Preview</button>
      </aside>

      <section class="stage">
        <div class="doc-tabs">
          <button class="doc"><svg viewBox="0 0 32 32" v-html="icons.discovery" />Discovery Center</button>
          <button class="doc on">
            <svg viewBox="0 0 32 32" v-html="icons.simTab" />(Simulation) steel_lifting_yoke_evaluation.sim
            <svg class="clip" viewBox="0 0 32 32" v-html="icons.clipboard" />
            <svg class="shut" viewBox="0 0 10 10"><path d="M1 1L9 9M9 1L1 9" stroke="#fff" stroke-width="2" /></svg>
          </button>
        </div>
        <div class="viewport">
          <svg class="scene" viewBox="574 204 1306 848" preserveAspectRatio="xMidYMid meet">
            <defs>
              <clipPath id="top"><path d="M878 788L1224 703L1449 827L1112 915Z" /></clipPath>
              <clipPath id="lf"><path d="M878 788L1112 915V991L878 864Z" /></clipPath>
              <clipPath id="rf"><path d="M1112 915L1449 827V903L1112 991Z" /></clipPath>
              <radialGradient id="dense"><stop offset="0" stop-color="#3c7a68" /><stop offset=".5" stop-color="#3c8a70" stop-opacity=".7" /><stop offset="1" stop-color="#3f9a78" stop-opacity="0" /></radialGradient>
              <pattern id="fine" width="5" height="4" patternUnits="userSpaceOnUse"><path d="M0 0L5 4M0 4L5 0" stroke="#2f6a5c" stroke-width=".6" /></pattern>
            </defs>
            <path d="M878 788L1224 703L1449 827L1112 915Z" fill="#5bb587" />
            <path d="M878 788L1112 915V991L878 864ZM1112 915L1449 827V903L1112 991Z" fill="#3d7455" />
            <g fill="none" stroke="#6f6f6c" stroke-width=".9">
              <path :d="topMesh" clip-path="url(#top)" />
              <path :d="leftMesh" clip-path="url(#lf)" />
              <path :d="rightMesh" clip-path="url(#rf)" />
            </g>
            <g clip-path="url(#top)">
              <template v-for="f in feet" :key="f[0]">
                <ellipse :cx="f[0]" :cy="f[1]" rx="40" ry="17" fill="url(#dense)" />
                <ellipse :cx="f[0]" :cy="f[1]" rx="30" ry="12" fill="url(#fine)" />
              </template>
            </g>
            <path :d="hatch" stroke="#4a5f7d" stroke-width=".8" fill="none" />
            <path d="M878 788L1224 703L1449 827L1112 915ZM878 788V864L1112 991L1449 903V827M1112 975V991" fill="none" stroke="#111" stroke-dasharray="2 2" />
            <g fill="#666" stroke="#5c5c5c" stroke-width=".8">
              <polygon v-for="p in rear" :key="p" :points="p" />
              <polygon v-for="p in fore" :key="p" :points="p" />
            </g>
            <path :d="seams" fill="none" stroke="#1c1c1c" stroke-dasharray="2 4" />
            <path d="M930 470V515M1388 560V640M1384 520V580M1201 540V600M1187 385V460" stroke="#000" stroke-dasharray="7 2" />
            <g fill="none" stroke="#0f6fae" stroke-width="1.500">
              <path v-for="f in feet" :key="f[1]" :d="`M${f[0] - 18} ${f[1] - 4}l10 3l8 5l18 -7M${f[0] - 14} ${f[1] - 3}h12M${f[0] - 8} ${f[1] - 14}v10`" />
              <path d="M1112 536H1130M1120 530V545M1268 548L1284 543M1276 538V548M1296 561H1311M1304 555V564" />
            </g>
            <g stroke="#d8321c" fill="#cf1a1f">
              <template v-for="(a, i) in arrows" :key="i">
                <line :x1="a[0]" :y1="a[1]" :x2="a[2]" :y2="a[3]" :stroke="i % 3 ? '#d8321c' : '#d0691c'" />
                <circle :cx="a[2]" :cy="a[3]" r="3" stroke="none" />
                <circle :cx="a[2] + (a[0] - a[2]) * 0.3" :cy="a[3] + (a[1] - a[3]) * 0.3" r="2" stroke="none" />
              </template>
            </g>
            <g font-size="14">
              <path d="M1449 903L1446 872L1449 853L1452 872Z" fill="#2a1fd8" />
              <path d="M1450 903L1430 896L1419 885L1434 889Z" fill="#e8a08a" stroke="#c0643c" stroke-width=".6" />
              <path d="M1450 903L1405 915L1425 904Z" fill="#12b012" />
              <path d="M1442 903H1457M1450 896V910" stroke="#a0641c" stroke-width="1.500" />
              <text x="1453" y="850" fill="#1a4fe0">ZC</text>
              <text x="1418" y="883" fill="#c8321a">XC</text>
              <text x="1403" y="930" fill="#12a83a">YC</text>
            </g>
            <text class="volupe" x="1510" y="968">volupe</text>
            <text class="tagline" x="1528" y="993">Engineering Software</text>
            <g fill="none" stroke="#999"><path d="M1745 919L1779 910L1803 923L1768 932ZM1745 919V958L1768 971L1803 962V923M1768 932V971" /></g>
            <path d="M1772 921V891H1769L1774 873L1779 891H1776V921Z" fill="#2b18d0" />
            <path d="M1733 918L1744 919V927L1739 925Z" fill="#cc1a1a" />
            <path d="M1758 944L1729 948L1714 957L1732 957L1758 947Z" fill="#0a2a12" /><path d="M1714 957L1727 948L1748 945L1730 952Z" fill="#12c012" />
            <g font-size="12"><text x="1770" y="869" fill="#1a4fe0">Z</text><text x="1723" y="919" fill="#cc2a1a">X</text><text x="1703" y="962" fill="#2a6a3a">Y</text></g>
          </svg>
        </div>
      </section>

      <aside class="dock">
        <div class="dock-list">
          <button v-for="n in dockIcons" :key="n" :aria-label="n"><svg viewBox="0 0 32 32" v-html="icons[n]" /></button>
        </div>
        <i class="collapse" />
      </aside>
    </main>

    <footer class="status" />
  </div>
</template>

<style>
html, body { margin: 0; }
body { background: #00608e; }
</style>

<style scoped>
.app {
  display: flex; flex-direction: column; box-sizing: border-box; min-height: 100vh; overflow: hidden;
  padding: 0 4px 5px 2px; font: 12px/16px Roboto, "Open Sans", sans-serif; color: #111;
  background: linear-gradient(90deg, #00608d 0%, #006c99 45%, #007aa6 100%);
}
button { padding: 0; border: 0; background: none; font: inherit; color: inherit; }
svg { display: block; flex: none; }
i { display: block; flex: none; }
.caret { width: 0; height: 0; border: 4px solid transparent; border-top-color: currentColor; border-bottom: 0; }

.title-bar { display: flex; align-items: center; height: 36px; color: #fff; }
.quick { display: flex; align-items: center; width: 346px; }
.brand { width: 49px; padding-left: 3px; box-sizing: border-box; font: 800 21px/24px "Open Sans", sans-serif; }
.q { display: grid; place-items: center; width: 24px; height: 24px; margin-right: 5px; }
.q svg, .window-btn svg { width: 17px; height: 17px; }
.q.slim { width: 12px; }
.q.near { margin-right: 2px; }
.q.custom { align-content: center; row-gap: 2px; margin-left: 4px; }
.dash { width: 7px; height: 1px; background: #fff; }
.window-btn { display: flex; align-items: center; gap: 4px; }
h1 { flex: 1; margin: 0; text-align: center; font-size: 12px; font-weight: 400; }
.frame-btns { display: flex; align-items: center; width: 153px; }
.frame-btns strong { width: 90px; font: 800 13px/16px "Open Sans", sans-serif; }
.frame-btns button { width: 22px; }
.frame-btns svg { width: 13px; height: 13px; }

.menu-bar { display: flex; height: 25px; color: #fff; font-size: 13px; }
.tab { height: 23px; padding: 0 15px 0 16px; border-bottom: 2px solid transparent; }
.tab.first { padding: 0 25px 0 19px; }
.tab.on { color: #ffb06a; border-color: #ffb06a; }
.menu-right { display: flex; align-items: center; height: 22px; margin-left: auto; font-size: 12px; }
.search { display: flex; align-items: center; box-sizing: border-box; width: 160px; height: 20px; margin-right: 4px; border: 1px solid #777; background: #fff; }
.search input { flex: 1; min-width: 0; padding: 0 2px; border: 0; outline: 0; font: inherit; background: none; }
.search input::placeholder { color: #a0a0a0; }
.search svg { width: 18px; height: 18px; margin-right: 1px; }
.menu-right button { display: grid; place-items: center; width: 26px; }
.menu-right button:last-child { margin-right: 1px; }
.menu-right button svg { width: 17px; height: 17px; }

.ribbon { display: flex; height: 88px; position: relative; background: #fff; border-bottom: 1px solid #d8d8d8; }
.group { display: flex; flex-direction: column; position: relative; box-sizing: border-box; }
.group::after { content: ""; position: absolute; right: 0; top: 5px; bottom: 5px; width: 1px; background: #dcdcdc; }
.items { display: flex; align-items: flex-start; height: 73px; padding-top: 6px; box-sizing: border-box; }
.big { display: flex; flex-direction: column; align-items: center; line-height: 13px; white-space: nowrap; }
.big svg { width: 32px; height: 32px; margin-bottom: 5px; }
.big.more svg { margin-bottom: 4px; }
.big span { display: flex; align-items: center; gap: 3px; }
.big:disabled { color: #c4c4c4; }
.caret-line { height: 13px; }
.grid { display: grid; grid-auto-rows: 34px; }
.grid.tight { grid-auto-rows: 23px; }
.grid button { display: grid; place-items: center; height: 28px; }
.grid.tight button { height: 16px; }
.grid svg { width: 24px; height: 24px; }
.grid.tight svg { width: 17px; height: 17px; }
.caption { display: flex; align-items: center; height: 15px; padding-right: 7px; color: #00638f; }
.caption span { flex: 1; text-align: center; white-space: nowrap; }
.caption .caret { color: #000; margin-bottom: 4px; }
.ribbon-end, .bar-end { position: absolute; right: 5px; bottom: 8px; }

.toolbar { display: flex; align-items: center; height: 27px; position: relative; background: #fff; border-bottom: 1px solid #a5a5a5; }
.menu-btn { display: flex; align-items: center; gap: 7px; width: 65px; margin: 0 2px 0 12px; }
.menu-btn svg { width: 11px; height: 11px; }
.sep { width: 1px; height: 20px; background: #ddd; }
.select { position: relative; height: 22px; }
.select select { appearance: none; width: 100%; height: 100%; padding: 0 2px; border: 1px solid #777; border-radius: 0; background: #fff; font: inherit; color: inherit; }
.select .caret { position: absolute; right: 6px; top: 10px; pointer-events: none; }
.one { width: 137px; margin-left: 11px; }
.two { width: 143px; margin-right: 5px; }
.t { display: grid; place-items: center; width: 25px; height: 24px; }
.t.wide { width: 33px; }
.t.slim { width: 14px; }
.t svg { width: 18px; height: 18px; }
.t.lit { background: #cfeaee; margin-right: 7px; width: 23px; }
.t + .sep { margin-right: 8px; }

.body { display: flex; flex: 1; min-height: 0; background: #fff; }
.rail { flex: none; width: 37px; box-sizing: border-box; background: #dadada; border-right: 1px solid #a8a8a8; }
.rail button { display: grid; place-items: center; box-sizing: border-box; width: 37px; height: 44px; padding-left: 3px; }
.rail button.first { width: 34px; height: 30px; }
.rail .first svg { width: 18px; height: 18px; }
.rail button.on { background: #fff; border: 1px solid #a8a8a8; border-right: 0; margin-left: 3px; width: 34px; padding: 0; }
.rail svg { width: 24px; height: 24px; }

.panel { display: flex; flex-direction: column; flex: none; width: 533px; box-sizing: border-box; padding: 0 9px 5px 8px; }
.panel-title { display: flex; align-items: center; height: 24px; padding-bottom: 2px; }
.panel-title svg { width: 16px; height: 16px; }
h2 { flex: 1; margin: 0 0 0 2px; font-size: 12px; font-weight: 400; }
.panel-title button { margin-right: 1px; }
.panel-title button i { width: 10px; height: 9px; border: 1px solid #000; border-top-width: 2px; }
.tree-box { display: flex; flex-direction: column; flex: 1; position: relative; border: 1px solid #d8d8d8; background: #f2f2f2; }
.tree { width: 100%; table-layout: fixed; border-spacing: 0; }
.c-name { width: 226px; } .c-tiny { width: 24px; } .c-status { width: 201px; } .c-src { width: 24px; }
.f-name { width: 150px; } .f-status { width: 104px; } .f-gut { width: 17px; }
th { height: 18px; padding: 0 0 0 5px; background: #f1f1f1; border-right: 1px solid #cfcfcf; border-bottom: 1px solid #cfcfcf; font-weight: 400; text-align: left; white-space: nowrap; overflow: hidden; }
th.lead { padding-left: 6px; }
th:last-child { border-right: 0; }
td { height: 19px; padding: 0 0 0 4px; background: #fff; border-right: 1px solid #e8e8e8; border-bottom: 1px solid #e8e8e8; white-space: nowrap; overflow: hidden; }
td:first-child { padding: 0; }
tr:nth-child(even) td { background: #fafafa; }
td.gutter, tr:nth-child(even) td.gutter { background: #f2f2f2; border: 0; }
.stub td { height: 12px; border-bottom: 0; }
td.active, .node.active { color: #1b22e0; }
.node { display: flex; align-items: center; height: 19px; }
.guide { width: 19px; height: 20px; }
.ico { width: 16px; height: 16px; }
.ico.eye { width: 15px; margin-right: 1px; }
.node span { margin-left: 3px; }
.swatch { width: 14px; height: 14px; border: 1px solid #000; margin-left: -1px; }
.dot { width: 12px; height: 12px; border: 1px solid #666; border-radius: 50%; }
.dot.on { background: #12b312; border-color: #3c7a3c; }
.h-track { flex: 1; display: flex; align-items: center; min-height: 16px; padding-left: 17px; }
.h-track i { width: 166px; height: 2px; background: #888; }
.v-thumb { position: absolute; width: 2px; background: #888; }
.tree-box .v-thumb { right: 8px; top: 174px; height: 360px; }
.pointer { position: absolute; left: 20px; top: 505px; width: 12px; height: 19px; }
.splitter { height: 4px; margin: 2px 0; border: 1px solid #a8a8a8; background: #d5d5d5; }
.file-view { padding: 0 3px 3px 4px; border: 1px solid #d8d8d8; }
.fold { display: flex; align-items: center; gap: 7px; height: 25px; padding: 0 0 2px 2px; color: #00638f; font-size: 14px; }
.fold.open { height: 27px; padding-bottom: 3px; box-sizing: border-box; }
.fold i { width: 0; height: 0; border: 5px solid transparent; border-top: 6px solid #00638f; border-bottom: 0; }
.fold.preview { box-sizing: border-box; padding: 0 0 0 8px; gap: 8px; border-bottom: 2px solid #d0d0d0; }
.preview i { border: 5px solid transparent; border-left: 6px solid #00638f; border-right: 0; }
.file-box { position: relative; height: 205px; overflow: hidden; border: 1px solid #d0d0d0; }
.file-box .v-thumb { right: 8px; top: 36px; height: 91px; }

.stage { display: flex; flex-direction: column; flex: 1; min-width: 0; border-left: 1px solid #a8a8a8; }
.doc-tabs { display: flex; height: 24px; border-bottom: 2px solid #00608d; }
.doc { display: flex; align-items: center; gap: 4px; width: 137px; box-sizing: border-box; padding-left: 6px; white-space: nowrap; }
.doc svg { width: 16px; height: 16px; }
.doc.on { width: 304px; background: #00608d; color: #fff; }
.doc .clip { width: 14px; height: 14px; margin-left: auto; }
.doc .shut { width: 9px; height: 9px; margin: 0 7px 0 1px; }
.viewport { flex: 1; display: flex; background: linear-gradient(#b3b3b5 0%, #cdced0 38%, #e4e5e8 75%, #e8e9ec 100%); }
.scene { flex: 1; width: 100%; font-family: "Liberation Sans", sans-serif; }
.volupe { font: 900 94px Lato, sans-serif; fill: #77777a; }
.tagline { font: 16px Roboto, sans-serif; fill: #77777a; }

.dock { display: flex; flex-direction: column; justify-content: space-between; flex: none; width: 36px; }
.dock-list { margin: 0 5px; padding-top: 8px; padding-bottom: 6px; border-bottom: 1px solid #d0d0d0; }
.dock-list button { display: grid; place-items: center; width: 25px; height: 32px; color: #5f5f5f; }
.dock-list svg { width: 23px; height: 23px; }
.collapse { width: 0; height: 0; margin: 0 0 6px 8px; border: 4px solid transparent; border-right-color: #000; border-left: 0; }

.status { height: 21px; background: #fff; border-top: 1px solid #a8a8a8; border-bottom: 1px solid #a8a8a8; }
</style>
